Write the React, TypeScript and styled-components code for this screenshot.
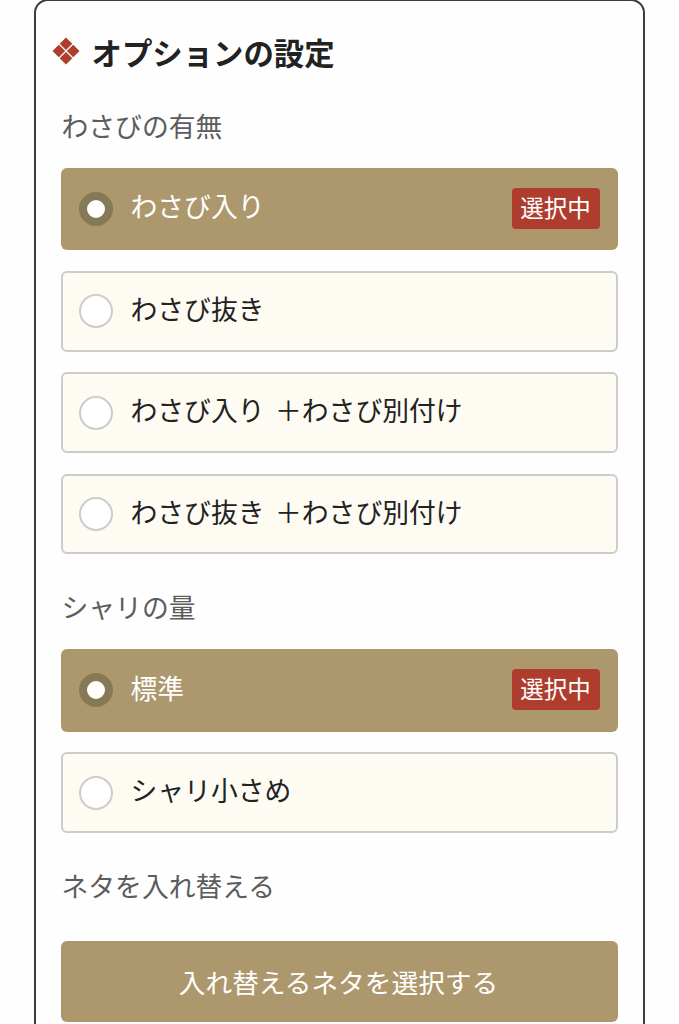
import React from "react";
import styled, { createGlobalStyle } from "styled-components";

const GlobalStyle = createGlobalStyle`
  * { box-sizing: border-box; }
  body { margin: 0; background: #fefefe; overflow: hidden; }
`;

const Screen = styled.main`
  height: 1024px;
  overflow: hidden;
  padding: 0 34px;
  background: #fefefe;
  color: #222;
  font-family: "Noto Sans CJK JP", sans-serif;
  font-weight: 400;
`;

const Panel = styled.section`
  height: 1060px;
  margin-top: -1px;
  padding: 29px 25px 0 25px;
  border: 2px solid #3c3c3e;
  border-radius: 14px;
`;

const Title = styled.h1`
  display: flex;
  align-items: center;
  gap: 11.5px;
  height: 44px;
  margin: 0 0 0 -9px;
  font-size: 30.4px;
  font-weight: 700;
  line-height: 44px;
  white-space: nowrap;
`;

const Mark = styled.svg`
  flex: none;
  margin-bottom: 2px;
`;

const GroupLabel = styled.h2<{ $top: number; $bottom: number }>`
  height: 40px;
  margin: ${(p) => p.$top}px 0 ${(p) => p.$bottom}px 0.5px;
  color: #5c5c5c;
  font-size: 26.8px;
  font-weight: 400;
  line-height: 40px;
`;

const Options = styled.div`
  display: flex;
  flex-direction: column;
  gap: 20.5px;
`;

const Option = styled.div<{ $selected?: boolean }>`
  display: flex;
  align-items: center;
  height: ${(p) => (p.$selected ? 82.7 : 80.9)}px;
  padding: 0 ${(p) => (p.$selected ? 18 : 16)}px;
  border: ${(p) => (p.$selected ? "0" : "2px solid #ccc")};
  border-radius: 6px;
  background: ${(p) => (p.$selected ? "#ac986c" : "#fefbf3")};
  color: ${(p) => (p.$selected ? "#fff" : "#222")};
`;

const Radio = styled.span<{ $selected?: boolean }>`
  width: 34px;
  height: 34px;
  margin-right: 17.5px;
  border: ${(p) => (p.$selected ? "8px solid #857a55" : "2px solid #ccc")};
  border-radius: 50%;
  background: #fff;
`;

const OptionText = styled.span`
  flex: 1;
  padding-bottom: 5px;
  font-size: 26.8px;
  line-height: 40px;
  word-spacing: 4.5px;
  white-space: pre;
`;

const Badge = styled.span`
  width: 88px;
  height: 41px;
  margin-bottom: 1px;
  padding-right: 1px;
  border-radius: 4px;
  background: #ae3d2e;
  font-size: 23.5px;
  line-height: 39px;
  text-align: center;
`;

const Button = styled.button`
  display: block;
  width: 100%;
  height: 81px;
  padding: 0 2px 0 0;
  border: 0;
  border-radius: 6px;
  background: #ac986c;
  color: #fff;
  font: inherit;
  font-size: 26.7px;
`;

const Choice = ({ label, selected }: { label: string; selected?: boolean }) => (
  <Option $selected={selected}>
    <Radio $selected={selected} />
    <OptionText>{label}</OptionText>
    {selected && <Badge>選択中</Badge>}
  </Option>
);

const Ornament = () => (
  <Mark width="28" height="28" viewBox="0 0 28 28" fill="#ae3d2e">
    <path d="M14 .5l6.3 6.3-6.3 6.3-6.3-6.3zM14 14.9l6.3 6.3-6.3 6.3-6.3-6.3zM6.8 7.7l6.3 6.3-6.3 6.3L.5 14zM21.2 7.7l6.3 6.3-6.3 6.3-6.3-6.3z" />
  </Mark>
);

export default function App() {
  return (
    <>
      <GlobalStyle />
      <Screen>
        <Panel>
          <Title>
            <Ornament />
            <span>オプションの設定</span>
          </Title>
          <GroupLabel $top={32} $bottom={21.6}>わさびの有無</GroupLabel>
          <Options>
            <Choice label="わさび入り" selected />
            <Choice label="わさび抜き" />
            <Choice label="わさび入り ＋わさび別付け" />
            <Choice label="わさび抜き ＋わさび別付け" />
          </Options>
          <GroupLabel $top={32.5} $bottom={22}>シャリの量</GroupLabel>
          <Options>
            <Choice label="標準" selected />
            <Choice label="シャリ小さめ" />
          </Options>
          <GroupLabel $top={32.8} $bottom={35.1}>ネタを入れ替える</GroupLabel>
          <Button>入れ替えるネタを選択する</Button>
        </Panel>
      </Screen>
    </>
  );
}
